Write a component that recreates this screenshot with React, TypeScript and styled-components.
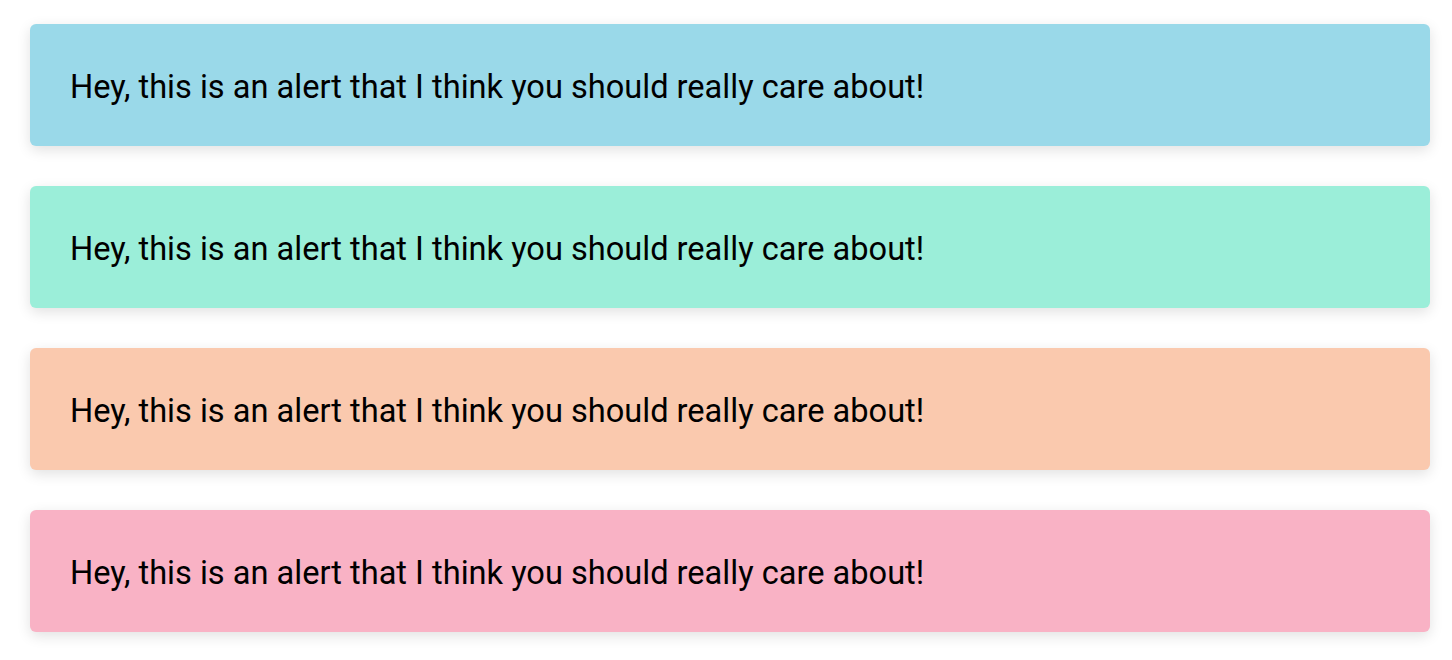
import React from "react";
import styled, { createGlobalStyle } from "styled-components";

const GlobalStyle = createGlobalStyle`
  html, body { margin: 0; padding: 0; background: #ffffff; }
  body { font-family: Roboto, "Liberation Sans", sans-serif; }
`;

const Stack = styled.div`
  display: flex;
  flex-direction: column;
  gap: 40px;
  padding: 24px 22px 24px 30px;
`;

const Alert = styled.div<{ $bg: string }>`
  background: ${(p) => p.$bg};
  border-radius: 6px;
  padding: 42px 40px 38px;
  box-shadow: 0 4px 14px rgba(0, 0, 0, 0.12);
  color: #000;
  font-size: 32.6px;
  line-height: 42px;
  font-family: Roboto, "Liberation Sans", sans-serif;
`;

const colors = ["#9ad9e9", "#9beed9", "#fac9ae", "#f9b2c5"];

export default function App() {
  return (
    <>
      <GlobalStyle />
      <Stack>
        {colors.map((c) => (
          <Alert key={c} $bg={c}>
            Hey, this is an alert that I think you should really care about!
          </Alert>
        ))}
      </Stack>
    </>
  );
}
